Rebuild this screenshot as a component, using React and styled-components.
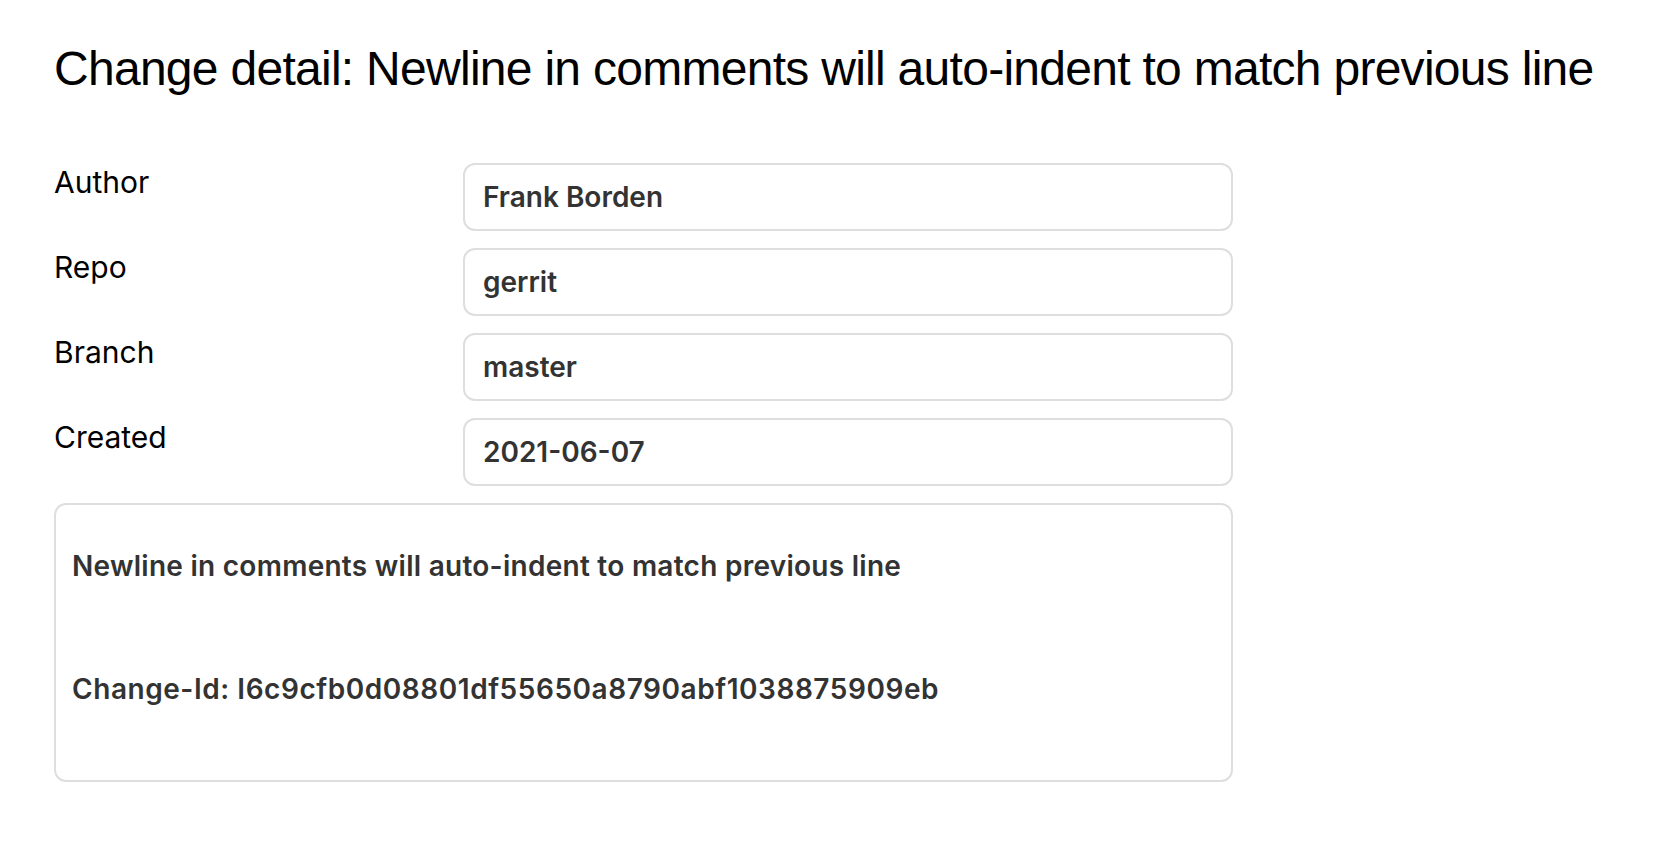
import React from "react";
import styled, { createGlobalStyle } from "styled-components";

const Global = createGlobalStyle`
  html, body { margin: 0; padding: 0; background: #ffffff; }
  body { font-family: Inter, "Liberation Sans", Arial, sans-serif; color: #000; }
`;

const Page = styled.main`
  padding: 40px 54px 40px;
`;

const Title = styled.h1`
  margin: 0 0 65px;
  font-family: "Liberation Sans", Arial, sans-serif;
  font-size: 48px;
  font-weight: 400;
  letter-spacing: -0.72px;
  line-height: 58px;
  color: #000;
  white-space: nowrap;
`;

const Form = styled.div`
  display: grid;
  grid-template-columns: 409px 770px;
  row-gap: 17px;
`;

const Label = styled.div`
  padding-top: 1px;
  font-size: 30px;
  line-height: normal;
  color: #000;
`;

const ValueBox = styled.div`
  box-sizing: border-box;
  height: 68px;
  display: flex;
  align-items: center;
  padding: 0 18px;
  border: 2px solid #dedede;
  border-radius: 12px;
  font-size: 28px;
  font-weight: 600;
  color: #333;
`;

const Description = styled.div`
  grid-column: 1 / -1;
  box-sizing: border-box;
  display: flex;
  flex-direction: column;
  gap: 89px;
  padding: 44px 16px 74px;
  border: 2px solid #dedede;
  border-radius: 12px;
  font-size: 28px;
  font-weight: 600;
  color: #333;
`;

const Para = styled.p`
  margin: 0;
  line-height: 34px;
  letter-spacing: ${(p) => (p.$wide ? "0.55px" : "0.27px")};
`;

const fields = [
  ["Author", "Frank Borden"],
  ["Repo", "gerrit"],
  ["Branch", "master"],
  ["Created", "2021-06-07"],
];

export default function App() {
  return (
    <Page>
      <Global />
      <Title>Change detail: Newline in comments will auto-indent to match previous line</Title>
      <Form>
        {fields.map(([k, v]) => (
          <React.Fragment key={k}>
            <Label>{k}</Label>
            <ValueBox>{v}</ValueBox>
          </React.Fragment>
        ))}
        <Description>
          <Para>Newline in comments will auto-indent to match previous line</Para>
          <Para $wide>Change-Id: I6c9cfb0d08801df55650a8790abf1038875909eb</Para>
        </Description>
      </Form>
    </Page>
  );
}
